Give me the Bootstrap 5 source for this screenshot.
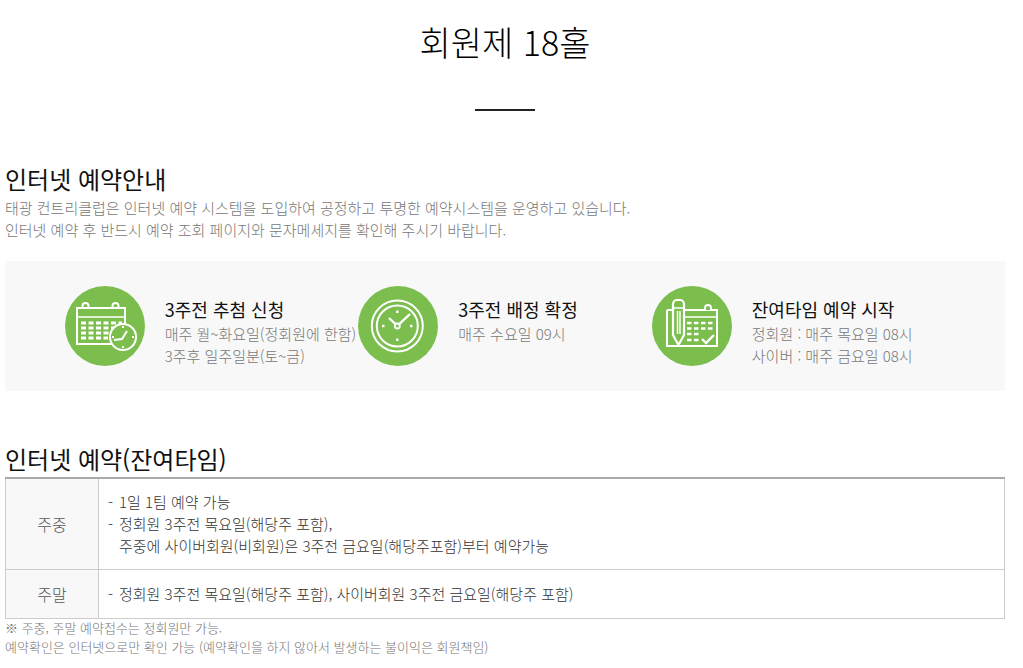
<!DOCTYPE html>
<html lang="ko">
<head>
<meta charset="utf-8">
<title>회원제 18홀</title>
<link href="https://cdn.jsdelivr.net/npm/bootstrap@5.3.0/dist/css/bootstrap.min.css" rel="stylesheet">
<style>
html,body{background:#fff}
body{font-family:"Noto Sans CJK KR","Noto Sans",sans-serif;font-weight:300;color:#222;overflow:hidden;height:668px}
.pagewrap{width:1000px;margin-left:5px}
.ptitle{font-size:34px;font-weight:300;line-height:50px;color:#000;text-align:center;margin:0;padding-top:17px}
.pbar{width:60px;height:2px;background:#222;margin:42px auto 0}
.sect-h{font-size:24px;font-weight:400;line-height:34px;color:#111;margin:0}
.sect-first{margin-top:51px;margin-bottom:1px}
.intro{font-size:15px;line-height:22px;color:#777;margin:0}
.band{height:130px;background:#f8f8f8;margin-top:20px;padding:25px 0 0 59.8px}
.band-item{width:293.5px}
.disc{width:80px;height:80px;border-radius:50%;background:#7bbe4e;flex:none}
.disc svg{display:block;width:80px;height:80px;fill:none;stroke:#fff;stroke-width:2}
.band-text{margin-left:20px;white-space:nowrap}
.band-h{font-size:18px;font-weight:400;line-height:25px;color:#111;margin:11px 0 1px}
.band-p{font-size:15px;line-height:22px;color:#777;margin:0}
.sect2{margin-top:51px}
.rtable{width:1000px;margin:1px 0 0;border-top:2px solid #aaa;border-collapse:collapse;table-layout:fixed;font-size:15px;color:#333}
.rtable th,.rtable td{border:1px solid #ccc;vertical-align:middle}
.rtable tr:first-child th,.rtable tr:first-child td{border-top:0}
.rtable th{width:93px;background:#f8f8f8;font-weight:300;text-align:center;color:#555;font-size:16px}
.rtable td{padding:0 0 0 9px;line-height:22px}
.rtable .r1{height:91px}
.rtable .r2{height:49px}
.ind{display:inline-block;width:11px}
.note{font-size:13px;line-height:19px;color:#777;margin:0}
.notes{margin-top:-1px}
</style>
</head>
<body>
<div class="pagewrap">
  <h1 class="ptitle">회원제 18홀</h1>
  <div class="pbar"></div>

  <h2 class="sect-h sect-first">인터넷 예약안내</h2>
  <p class="intro">태광 컨트리클럽은 인터넷 예약 시스템을 도입하여 공정하고 투명한 예약시스템을 운영하고 있습니다.</p>
  <p class="intro">인터넷 예약 후 반드시 예약 조회 페이지와 문자메세지를 확인해 주시기 바랍니다.</p>

  <div class="band d-flex">
    <div class="band-item d-flex">
      <div class="disc">
        <svg viewBox="0 0 80 80">
          <path d="M46 58H12V22H60V38"/>
          <path d="M12 31H60" stroke-width="1.500"/>
          <path d="M17.500 22v-2a3 3 0 0 1 6 0v2M47.500 22v-2a3 3 0 0 1 6 0v2"/>
          <path d="M16 37h41M16 42h38M16 47h29M16 52h27" stroke-width="3" stroke-dasharray="5 2.500"/>
          <circle cx="58" cy="51" r="13" fill="#7bbe4e"/>
          <path d="M49 54l8-1 5-8"/>
          <path d="M58 40v2M58 60v2M47 51h2M67 51h2"/>
        </svg>
      </div>
      <div class="band-text">
        <p class="band-h">3주전 추첨 신청</p>
        <p class="band-p">매주 월~화요일(정회원에 한함)</p>
        <p class="band-p">3주후 일주일분(토~금)</p>
      </div>
    </div>
    <div class="band-item d-flex">
      <div class="disc">
        <svg viewBox="0 0 80 80">
          <circle cx="39.300" cy="40" r="25.500"/>
          <circle cx="39.300" cy="40" r="20.500"/>
          <circle cx="39.300" cy="40" r="2.500" stroke-width="1.800"/>
          <path d="M37.500 38.200L31 32M41.200 38.200L52 28" stroke-width="2.400"/>
          <path d="M39.300 24.500v2.500M39.300 52.500v2.500M24 40h2.500M52 40h2.500" stroke-width="2.400"/>
        </svg>
      </div>
      <div class="band-text">
        <p class="band-h">3주전 배정 확정</p>
        <p class="band-p">매주 수요일 09시</p>
      </div>
    </div>
    <div class="band-item d-flex">
      <div class="disc">
        <svg viewBox="0 0 80 80">
          <path d="M15 24V60H65V24H15"/>
          <path d="M30 31H65" stroke-width="1.500"/>
          <path d="M53 24v-2a3 3 0 0 1 6 0v2" fill="#7bbe4e"/>
          <path d="M35 37h27M35 42.500h27M35 48h14M35 54h14" stroke-width="2.500" stroke-dasharray="4.500 2.500"/>
          <path d="M50 53l4 4 8-8" stroke-width="2.400"/>
          <path d="M21 18a4 4 0 0 1 4-4h3a4 4 0 0 1 4 4v31l-5.500 10-5.500-10z" fill="#7bbe4e" stroke-width="2.200"/>
          <path d="M21 22H32M25.500 25V48M28 25V48" stroke-width="1.500"/>
        </svg>
      </div>
      <div class="band-text">
        <p class="band-h">잔여타임 예약 시작</p>
        <p class="band-p">정회원 : 매주 목요일 08시</p>
        <p class="band-p">사이버 : 매주 금요일 08시</p>
      </div>
    </div>
  </div>

  <div class="sect2">
    <h2 class="sect-h">인터넷 예약(잔여타임)</h2>
    <table class="rtable">
      <tbody>
        <tr class="r1">
          <th>주중</th>
          <td><span class="ind">-</span>1일 1팀 예약 가능<br><span class="ind">-</span>정회원 3주전 목요일(해당주 포함),<br><span class="ind"></span>주중에 사이버회원(비회원)은 3주전 금요일(해당주포함)부터 예약가능</td>
        </tr>
        <tr class="r2">
          <th>주말</th>
          <td><span class="ind">-</span>정회원 3주전 목요일(해당주 포함), 사이버회원 3주전 금요일(해당주 포함)</td>
        </tr>
      </tbody>
    </table>
    <div class="notes">
      <p class="note">※ 주중, 주말 예약접수는 정회원만 가능.</p>
      <p class="note">예약확인은 인터넷으로만 확인 가능 (예약확인을 하지 않아서 발생하는 불이익은 회원책임)</p>
    </div>
  </div>
</div>
<script src="https://cdn.jsdelivr.net/npm/bootstrap@5.3.0/dist/js/bootstrap.bundle.min.js"></script>
</body>
</html>
